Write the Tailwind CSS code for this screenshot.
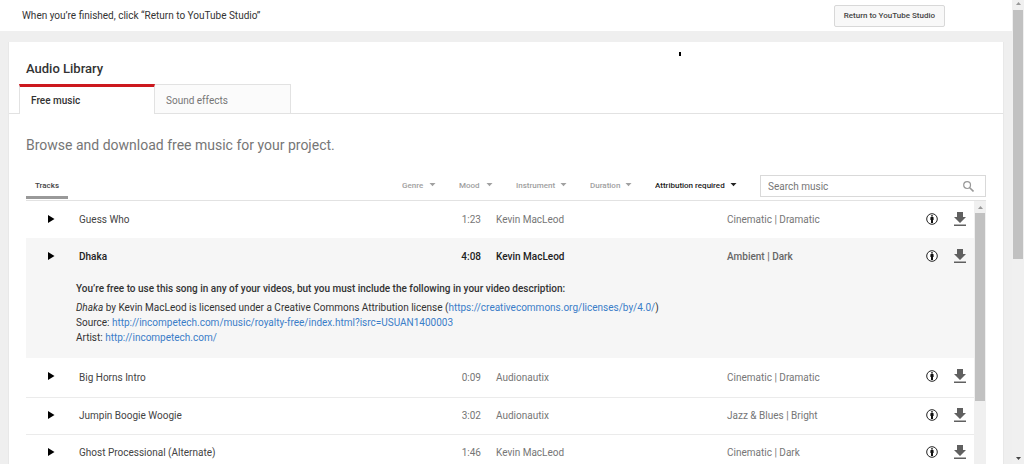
<!DOCTYPE html>
<html lang="en">
<head>
<meta charset="utf-8">
<meta name="viewport" content="width=device-width, initial-scale=1">
<title>Audio Library</title>
<script src="https://cdn.jsdelivr.net/npm/@tailwindcss/browser@4"></script>
</head>
<body class="flex h-screen overflow-hidden bg-[#efefef] font-[Roboto,sans-serif] text-[10px] leading-[15px] text-[#333]">
<svg class="hidden" aria-hidden="true">
  <symbol id="play" viewBox="0 0 7 8"><path d="M0 0 6.5 4 0 8z" fill="#000"/></symbol>
  <symbol id="by" viewBox="0 0 12 12"><circle cx="6" cy="6" r="5.3" fill="#fff" stroke="#222" stroke-width="1"/><circle cx="6" cy="2.8" r="0.9" fill="#111"/><path d="M4.4 4.4q0-.5.5-.5h2.2q.5 0 .5.5v2.5h-.6v3H5v-3h-.6z" fill="#111"/></symbol>
  <symbol id="download" viewBox="0 0 12 14"><path d="M3 0h6v5h3L6 11 0 5h3zM0 12.6h12V14H0z" fill="#606060"/></symbol>
  <symbol id="caret" viewBox="0 0 7 4"><path d="M.5 0h6l-3 3.3z" fill="currentColor"/></symbol>
</svg>

<div class="flex min-w-0 flex-1 flex-col">
  <header class="flex h-[31px] shrink-0 items-center justify-between bg-white pr-[67px] pl-[22px]">
    <p>When you’re finished, click “Return to YouTube Studio”</p>
    <button class="h-[22px] rounded-[2px] border border-[#d8d8d8] bg-[#f8f8f8] px-[9px] text-[8px] font-medium text-[#444]">Return to YouTube Studio</button>
  </header>

  <main class="relative mx-2 mt-[11px] flex min-h-0 flex-1 flex-col border-x border-[#e8e8e8] bg-white">
    <span class="absolute top-[10px] left-[670px] h-1 w-[2px] bg-black"></span>
    <h1 class="mt-[17px] ml-[17px] text-[13px] leading-5 font-medium">Audio Library</h1>
    <div class="mt-[5px] flex border-b border-[#e2e2e2] pl-[10px]" role="tablist">
      <button role="tab" aria-selected="true" class="-mb-px h-[30px] w-[136px] border-x border-t-3 border-x-[#e2e2e2] border-t-[#cc181e] bg-white pl-[11px] text-left font-medium">Free music</button>
      <button role="tab" aria-selected="false" class="h-[29px] w-[136px] border-t border-r border-[#e2e2e2] bg-[#fbfbfb] pt-[2px] pl-[11px] text-left text-[#767676]">Sound effects</button>
    </div>

    <h2 class="mt-5 ml-[17px] text-[14px] leading-[22px] text-[#767676]">Browse and download free music for your project.</h2>

    <section class="mt-[19px] mr-[17px] ml-[17px] flex min-h-0 flex-1 flex-col">
      <div class="flex h-[26px] shrink-0 border-b border-[#e2e2e2] text-[8px] font-medium text-[#a0a0a0]">
        <button class="h-6 w-[42px] border-b-3 border-[#999] text-[#444]">Tracks</button>
        <form class="flex flex-1 items-start justify-end gap-[23px]">
          <label class="flex h-5 items-center"><select aria-label="Genre" class="w-[27px] appearance-none"><option>Genre</option></select><svg class="h-1 w-[7px]"><use href="#caret"/></svg></label>
          <label class="flex h-5 items-center"><select aria-label="Mood" class="w-[27px] appearance-none"><option>Mood</option></select><svg class="h-1 w-[7px]"><use href="#caret"/></svg></label>
          <label class="flex h-5 items-center"><select aria-label="Instrument" class="w-[44px] appearance-none"><option>Instrument</option></select><svg class="h-1 w-[7px]"><use href="#caret"/></svg></label>
          <label class="flex h-5 items-center"><select aria-label="Duration" class="w-[35px] appearance-none"><option>Duration</option></select><svg class="h-1 w-[7px]"><use href="#caret"/></svg></label>
          <label class="flex h-5 items-center text-[#222]"><select aria-label="Attribution" class="w-[75px] appearance-none"><option>Attribution required</option></select><svg class="h-1 w-[7px]"><use href="#caret"/></svg></label>
          <div class="flex h-[22px] w-[226px] items-center border border-[#d9d9d9] bg-white pr-[11px] pl-[7px]">
            <input type="search" aria-label="Search music" placeholder="Search music" class="min-w-0 flex-1 text-[10px] font-normal text-[#333] outline-none placeholder:text-[#767676]">
            <button aria-label="Search"><svg class="size-[11px]" viewBox="0 0 11 11" fill="none" stroke="#999"><circle cx="4.1" cy="4.1" r="3.4" stroke-width="1.2"/><path d="m6.7 6.7 3.8 3.8" stroke-width="1.6"/></svg></button>
          </div>
        </form>
      </div>

      <div class="flex min-h-0 flex-1 overflow-hidden">
        <div class="min-w-0 flex-1 overflow-hidden">
          <table class="w-full table-fixed border-collapse text-left text-[#767676] [&_td_svg]:mb-[2px]">
            <colgroup><col class="w-[53px]"><col><col class="w-[60px]"><col class="w-[231px]"><col class="w-[191px]"><col class="w-[29px]"><col class="w-[27px]"></colgroup>
            <tbody>
              <tr class="h-[37px]">
                <td class="pl-[22px]"><button class="block" aria-label="Play Guess Who"><svg class="h-2 w-[7px]"><use href="#play"/></svg></button></td>
                <td class="text-[#444]">Guess Who</td><td class="pr-[15px] text-right">1:23</td><td>Kevin MacLeod</td><td>Cinematic | Dramatic</td>
                <td><a href="#" aria-label="Attribution required" class="ml-2 block"><svg class="size-3"><use href="#by"/></svg></a></td>
                <td><a href="#" aria-label="Download" class="ml-[7px] block"><svg class="h-[14px] w-3"><use href="#download"/></svg></a></td>
              </tr>
              <tr class="h-[37px] bg-[#f6f6f6] font-medium text-[#222]">
                <td class="pl-[22px]"><button class="block" aria-label="Play Dhaka"><svg class="h-2 w-[7px]"><use href="#play"/></svg></button></td>
                <td>Dhaka</td><td class="pr-[15px] text-right">4:08</td><td>Kevin MacLeod</td><td class="text-[#666]">Ambient | Dark</td>
                <td><a href="#" aria-label="Attribution required" class="ml-2 block"><svg class="size-3"><use href="#by"/></svg></a></td>
                <td><a href="#" aria-label="Download" class="ml-[7px] block"><svg class="h-[14px] w-3"><use href="#download"/></svg></a></td>
              </tr>
              <tr class="h-[83px] bg-[#f6f6f6] text-[#333]">
                <td colspan="7" class="pt-[6px] pl-[50px] align-top">
                  <p class="mb-1 font-medium">You’re free to use this song in any of your videos, but you must include the following in your video description:</p>
                  <p><em>Dhaka</em> by Kevin MacLeod is licensed under a Creative Commons Attribution license (<a href="https://creativecommons.org/licenses/by/4.0/" class="text-[#3a7dc8]">https://creativecommons.org/licenses/by/4.0/</a>)</p>
                  <p>Source: <a href="http://incompetech.com/music/royalty-free/index.html?isrc=USUAN1400003" class="text-[#3a7dc8]">http://incompetech.com/music/royalty-free/index.html?isrc=USUAN1400003</a></p>
                  <p>Artist: <a href="http://incompetech.com/" class="text-[#3a7dc8]">http://incompetech.com/</a></p>
                </td>
              </tr>
              <tr class="h-[39px] border-b border-[#ebebeb]">
                <td class="pl-[22px]"><button class="block" aria-label="Play Big Horns Intro"><svg class="h-2 w-[7px]"><use href="#play"/></svg></button></td>
                <td class="text-[#444]">Big Horns Intro</td><td class="pr-[15px] text-right">0:09</td><td>Audionautix</td><td>Cinematic | Dramatic</td>
                <td><a href="#" aria-label="Attribution required" class="ml-2 block"><svg class="size-3"><use href="#by"/></svg></a></td>
                <td><a href="#" aria-label="Download" class="ml-[7px] block"><svg class="h-[14px] w-3"><use href="#download"/></svg></a></td>
              </tr>
              <tr class="h-[37px] border-b border-[#ebebeb]">
                <td class="pl-[22px]"><button class="block" aria-label="Play Jumpin Boogie Woogie"><svg class="h-2 w-[7px]"><use href="#play"/></svg></button></td>
                <td class="text-[#444]">Jumpin Boogie Woogie</td><td class="pr-[15px] text-right">3:02</td><td>Audionautix</td><td>Jazz &amp; Blues | Bright</td>
                <td><a href="#" aria-label="Attribution required" class="ml-2 block"><svg class="size-3"><use href="#by"/></svg></a></td>
                <td><a href="#" aria-label="Download" class="ml-[7px] block"><svg class="h-[14px] w-3"><use href="#download"/></svg></a></td>
              </tr>
              <tr class="h-[37px]">
                <td class="pl-[22px]"><button class="block" aria-label="Play Ghost Processional (Alternate)"><svg class="h-2 w-[7px]"><use href="#play"/></svg></button></td>
                <td class="text-[#444]">Ghost Processional (Alternate)</td><td class="pr-[15px] text-right">1:46</td><td>Kevin MacLeod</td><td>Cinematic | Dark</td>
                <td><a href="#" aria-label="Attribution required" class="ml-2 block"><svg class="size-3"><use href="#by"/></svg></a></td>
                <td><a href="#" aria-label="Download" class="ml-[7px] block"><svg class="h-[14px] w-3"><use href="#download"/></svg></a></td>
              </tr>
            </tbody>
          </table>
        </div>
        <div class="flex w-3 flex-col items-center bg-[#f0f0f0]" aria-hidden="true">
          <svg class="mt-[5px] h-[3px] w-[5px]" viewBox="0 0 5 3"><path d="M0 3h5L2.5 0z" fill="#999"/></svg>
          <div class="mt-1 h-[188px] w-[10px] shrink-0 bg-[#c1c1c1]"></div>
        </div>
      </div>
    </section>
  </main>
</div>

<div class="flex w-3 shrink-0 flex-col items-center bg-[#f0f0f0]" aria-hidden="true">
  <svg class="mt-[2px] h-[3px] w-[5px]" viewBox="0 0 5 3"><path d="M0 3h5L2.5 0z" fill="#999"/></svg>
  <div class="mt-[5px] h-[249px] w-[10px] shrink-0 bg-[#c1c1c1]"></div>
  <svg class="mt-auto mb-1 h-[3px] w-[5px]" viewBox="0 0 5 3"><path d="M0 0h5L2.5 3z" fill="#444"/></svg>
</div>
</body>
</html>
